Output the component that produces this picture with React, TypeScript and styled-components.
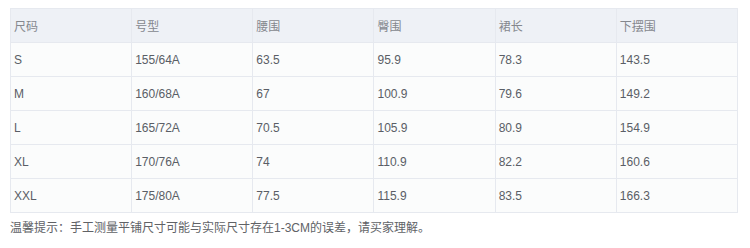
import styled, { createGlobalStyle } from 'styled-components';

const GlobalStyle = createGlobalStyle`
  html, body {
    margin: 0;
    padding: 0;
    background: #ffffff;
  }
  body {
    font-family: "Liberation Sans", Arial, "Noto Sans CJK SC", sans-serif;
  }
`;

const Page = styled.div`
  position: relative;
  width: 750px;
  height: 248px;
  padding: 8px 12px 0 10px;
  box-sizing: border-box;
  overflow: hidden;
`;

const Table = styled.table`
  width: 728px;
  border-collapse: collapse;
  table-layout: fixed;
  font-size: 12px;
`;

const Th = styled.th`
  height: 34px;
  padding: 0 3px;
  text-align: left;
  font-weight: normal;
  color: #85888e;
  background: #eef1f6;
  border: 1px solid #e6e9ef;
  box-sizing: border-box;
`;

const Td = styled.td`
  height: 34px;
  padding: 0 3px;
  color: #5a5e66;
  background: #fbfcfc;
  border: 1px solid #e6e9ef;
  box-sizing: border-box;
`;

const Note = styled.p`
  margin: 0;
  padding-top: 6px;
  font-size: 12px;
  line-height: 18px;
  color: #606266;
`;

const Watermark = styled.span<{ $x: number; $y: number }>`
  position: absolute;
  left: ${p => p.$x}px;
  top: ${p => p.$y}px;
  font-size: 18px;
  color: rgba(0, 0, 0, 0.025);
  transform: rotate(-35deg);
  white-space: nowrap;
  pointer-events: none;
`;

const headers = ['尺码', '号型', '腰围', '臀围', '裙长', '下摆围'];

const rows = [
  ['S', '155/64A', '63.5', '95.9', '78.3', '143.5'],
  ['M', '160/68A', '67', '100.9', '79.6', '149.2'],
  ['L', '165/72A', '70.5', '105.9', '80.9', '154.9'],
  ['XL', '170/76A', '74', '110.9', '82.2', '160.6'],
  ['XXL', '175/80A', '77.5', '115.9', '83.5', '166.3'],
];

const marks = [
  { x: 200, y: 60 }, { x: 540, y: 60 },
  { x: 60, y: 150 }, { x: 380, y: 150 },
];

export default function App() {
  return (
    <Page>
      <GlobalStyle />
      <Table>
        <thead>
          <tr>
            {headers.map(h => <Th key={h}>{h}</Th>)}
          </tr>
        </thead>
        <tbody>
          {rows.map(r => (
            <tr key={r[0]}>
              {r.map((c, i) => <Td key={i}>{c}</Td>)}
            </tr>
          ))}
        </tbody>
      </Table>
      <Note>温馨提示：手工测量平铺尺寸可能与实际尺寸存在1-3CM的误差，请买家理解。</Note>
      {marks.map((m, i) => (
        <Watermark key={i} $x={m.x} $y={m.y}>110057+207175</Watermark>
      ))}
    </Page>
  );
}
